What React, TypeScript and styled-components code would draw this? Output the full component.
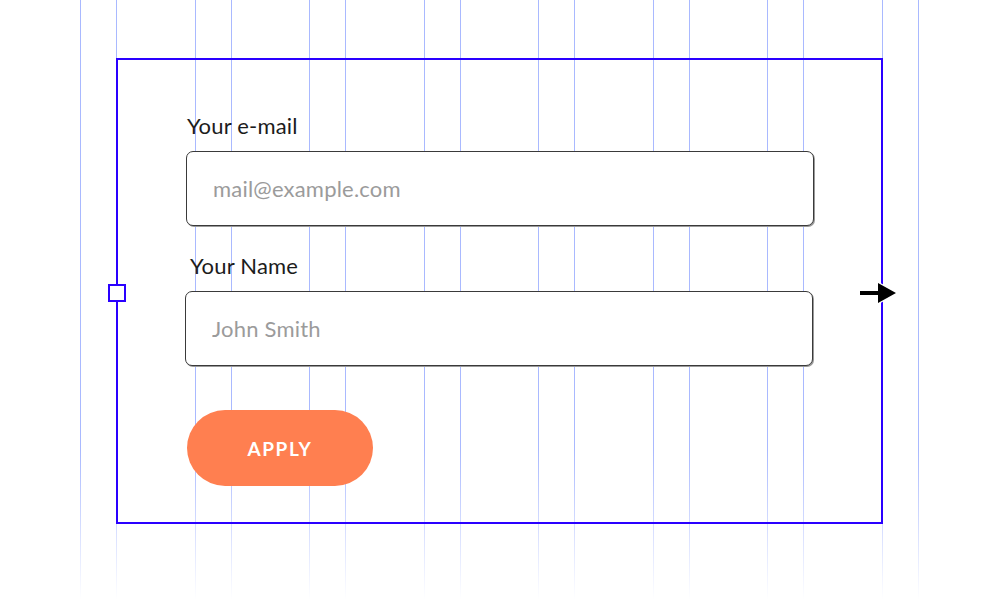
import React from "react";
import styled, { createGlobalStyle } from "styled-components";

const GlobalStyle = createGlobalStyle`
  html, body {
    margin: 0;
    padding: 0;
    background: #ffffff;
    font-family: "Lato", "Liberation Sans", sans-serif;
  }
  * {
    box-sizing: border-box;
  }
`;

const Page = styled.div`
  position: relative;
  width: 1000px;
  height: 600px;
  overflow: hidden;
  padding: 58px 0 0 116px;
`;

// layout grid drawn behind the form
const GridOverlay = styled.div`
  position: absolute;
  top: 0;
  left: 80px;
  width: 839px;
  height: 600px;
  display: flex;
  justify-content: space-between;
  pointer-events: none;
  -webkit-mask-image: linear-gradient(to bottom, #000 75%, transparent 100%);
  mask-image: linear-gradient(to bottom, #000 75%, transparent 100%);
`;

const GridColumn = styled.div`
  width: 37px;
  height: 100%;
  border-left: 1px solid #a9b9ff;
  border-right: 1px solid #a9b9ff;
`;

const Frame = styled.div`
  position: relative;
  width: 767px;
  height: 466px;
  border: 2px solid #2a00ff;
  padding: 51px 0 0 68px;
  display: flex;
  flex-direction: column;
`;

const Field = styled.div`
  display: flex;
  flex-direction: column;
  margin-bottom: 25px;
`;

const Label = styled.label<{ indent?: number }>`
  font-size: 22px;
  line-height: 30px;
  letter-spacing: 0.2px;
  color: #1c1c1c;
  margin: 0 0 10px ${(p) => p.indent ?? 1}px;
`;

const Input = styled.input<{ shift?: number }>`
  width: 628px;
  height: 75px;
  margin-left: ${(p) => p.shift ?? 0}px;
  border: 1px solid #3a3a3a;
  border-radius: 7px;
  box-shadow: 1px 1px 0 #9a9a9a;
  background: #ffffff;
  padding: 0 0 0 26px;
  font-family: inherit;
  font-size: 22px;
  letter-spacing: 0.2px;
  color: #222;
  outline: none;

  &::placeholder {
    color: #9b9b9b;
  }
`;

const ApplyButton = styled.button`
  margin: 19px 0 0 1px;
  width: 186px;
  height: 76px;
  border: none;
  border-radius: 38px;
  background: #ff7f50;
  color: #ffffff;
  font-family: inherit;
  font-size: 19px;
  font-weight: 700;
  letter-spacing: 1.6px;
  cursor: pointer;
`;

const SideHandle = styled.div`
  position: absolute;
  left: -10px;
  top: 224px;
  width: 18px;
  height: 18px;
  border: 2px solid #2a00ff;
  background: #ffffff;
`;

const ArrowMark = styled.svg`
  position: absolute;
  right: -17px;
  top: 221px;
`;

export default function App() {
  return (
    <>
      <GlobalStyle />
      <Page>
        <GridOverlay>
          {Array.from({ length: 8 }).map((_, i) => (
            <GridColumn key={i} />
          ))}
        </GridOverlay>
        <Frame>
          <Field>
            <Label>Your e-mail</Label>
            <Input type="email" placeholder="mail@example.com" />
          </Field>
          <Field>
            <Label indent={4}>Your Name</Label>
            <Input type="text" placeholder="John Smith" shift={-1} />
          </Field>
          <ApplyButton>APPLY</ApplyButton>
          <SideHandle />
          <ArrowMark width="40" height="24" viewBox="0 0 40 24">
            <path
              d="M2 10 H20 V2 L38 12 L20 22 V14 H2 Z"
              fill="#000"
              stroke="#fff"
              strokeWidth="2.5"
              paintOrder="stroke"
            />
          </ArrowMark>
        </Frame>
      </Page>
    </>
  );
}
